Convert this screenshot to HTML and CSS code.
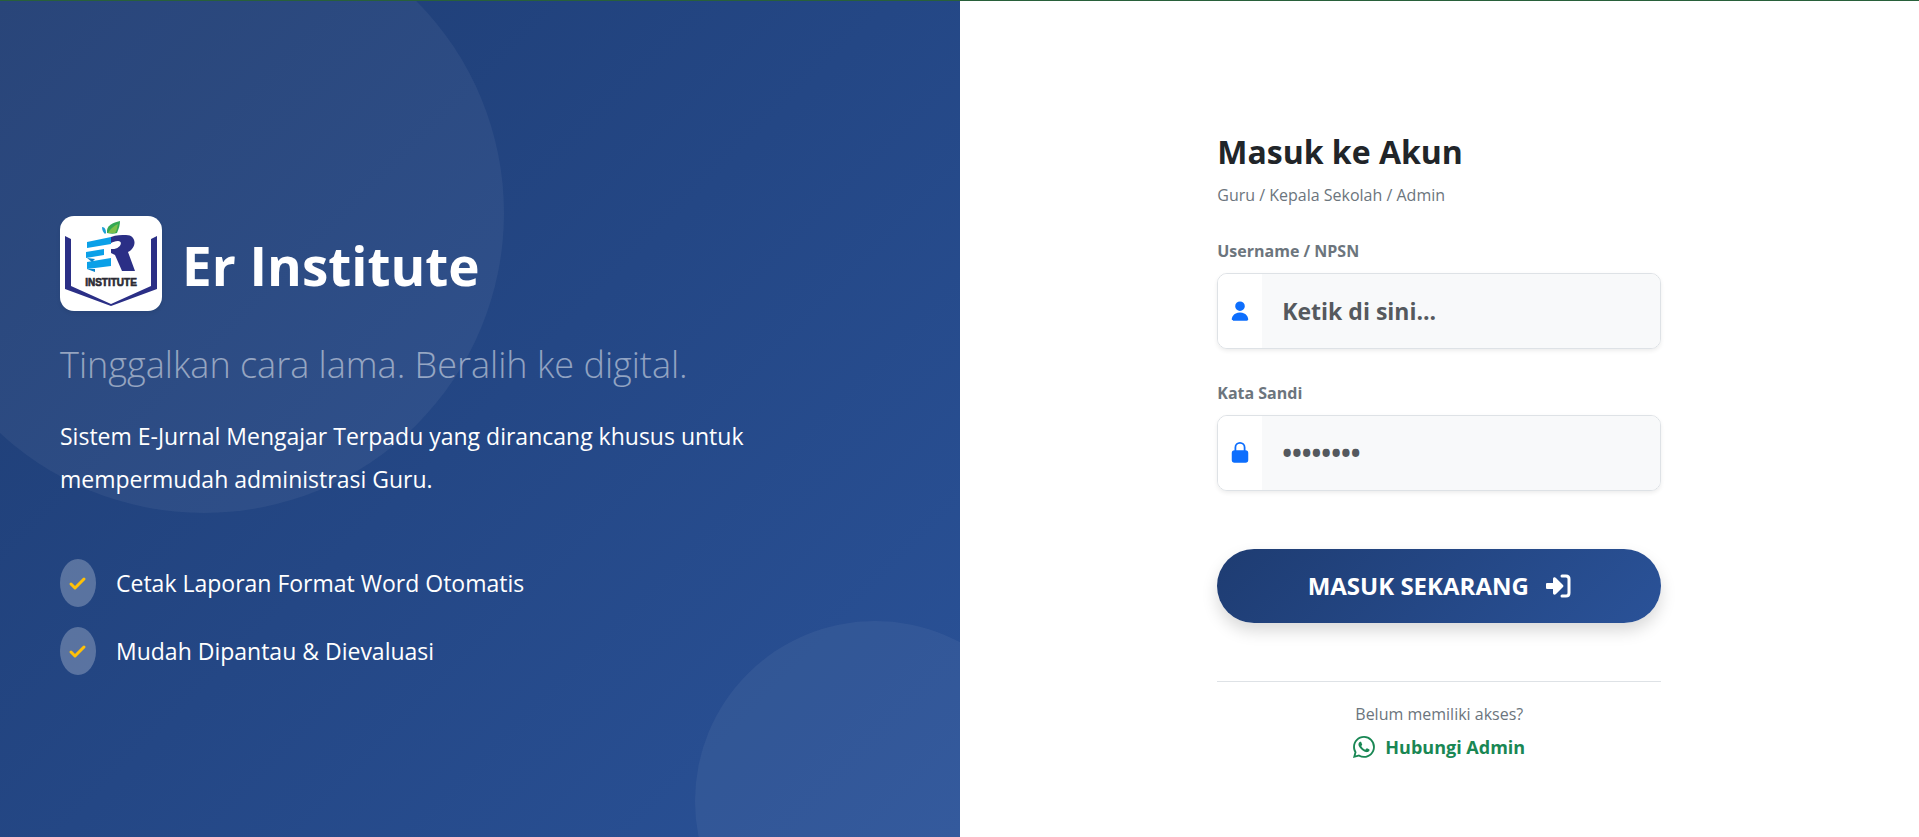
FILE: index.html
```html
<!DOCTYPE html>
<html lang="id">
<head>
  <meta charset="UTF-8">
  <meta name="viewport" content="width=device-width, initial-scale=1.0">
  <title>Login - Er Institute</title>
  <link rel="stylesheet" href="styles.css">
</head>
<body>
  <main class="login-page">
    <!-- Brand -->
    <section class="brand-side">
      <div class="circle circle-top"></div>
      <div class="circle circle-bottom"></div>

      <div class="brand-content">
        <div class="brand-header">
          <div class="brand-logo">
            <svg viewBox="0 0 92 85" role="img" aria-label="Logo Er Institute">
              <path d="M0 15l6 3v47l40 18 40-18V18l6-3v53L46 85 0 68z" fill="#2b2f86"/>
              <path d="M40 13c-2-2-3-4-3-7 3 0 4 3 4 6z" fill="#1c9fd8"/>
              <path d="M42 12c-1-8 6-10 13-12 0 4-1 7-3 12-3 1-6 1-10 0z" fill="#35a853"/>
              <path d="M43 12c3-5 6-7 10-9-1 4-1 6-3 9z" fill="#7cc04a"/>
              <path d="M22 21l24-5v7l-24 4zM21 31l18-3v6l-18 3zM22 41l24-4v8l-24 3z" fill="#0aa0e8"/>
              <path d="M22 37l8 1-3 3zM22 48h8v3z" fill="#0a86cc"/>
              <path d="M46 16c5-2 11-2 15-2 11 0 11 13 2 17l7 19H57l-7-16-4-2v-4c9 1 13-8 7-8-3 0-5 1-7 2z" fill="#2b2f86"/>
              <text x="46" y="65" text-anchor="middle" class="logo-text">INSTITUTE</text>
            </svg>
          </div>
          <h1>Er Institute</h1>
        </div>

        <h2 class="tagline">Tinggalkan cara lama. Beralih ke digital.</h2>
        <p class="description">Sistem E-Jurnal Mengajar Terpadu yang dirancang khusus untuk mempermudah administrasi Guru.</p>

        <ul class="features">
          <li>
            <span class="check">
              <svg viewBox="0 0 20 20" aria-hidden="true"><path d="M3 11l4 4 9-9"/></svg>
            </span>
            Cetak Laporan Format Word Otomatis
          </li>
          <li>
            <span class="check">
              <svg viewBox="0 0 20 20" aria-hidden="true"><path d="M3 11l4 4 9-9"/></svg>
            </span>
            Mudah Dipantau &amp; Dievaluasi
          </li>
        </ul>
      </div>
    </section>

    <!-- Form login -->
    <section class="form-side">
      <div class="form-box">
        <h2>Masuk ke Akun</h2>
        <p class="subtitle">Guru / Kepala Sekolah / Admin</p>

        <form>
          <div class="form-group">
            <label for="username">Username / NPSN</label>
            <div class="input-group">
              <span class="input-icon">
                <svg viewBox="0 0 16 16" aria-hidden="true"><path d="M3 15s-1 0-1-1 1-5 6-5 6 4 6 5-1 1-1 1zm5-7a3.500 3.500 0 1 0 0-7 3.500 3.500 0 0 0 0 7"/></svg>
              </span>
              <input type="text" id="username" name="username" placeholder="Ketik di sini...">
            </div>
          </div>

          <div class="form-group">
            <label for="password">Kata Sandi</label>
            <div class="input-group">
              <span class="input-icon">
                <svg viewBox="0 0 16 16" aria-hidden="true"><path d="M8 0a4 4 0 0 0-4 4v2.050a2 2 0 0 0-2 2V13a2 2 0 0 0 2 2h8a2 2 0 0 0 2-2V8a2 2 0 0 0-2-2V4a4 4 0 0 0-4-4m0 1.300A2.700 2.700 0 0 1 10.700 4v2H5.300V4A2.700 2.700 0 0 1 8 1.300"/></svg>
              </span>
              <input type="password" id="password" name="password" placeholder="••••••••">
            </div>
          </div>

          <button type="submit" class="btn-login">
            MASUK SEKARANG
            <svg viewBox="0 0 26 24" aria-hidden="true">
              <path d="M2 9h6V5c0-2 2-2 3-1l7 7q1 1 0 2l-7 7c-1 1-3 1-3-1v-4H2q-1 0-1-1v-4q0-1 1-1z" fill="currentColor"/>
              <path d="M17 2h4q3 0 3 3v14q0 3-3 3h-4" fill="none" stroke="currentColor" stroke-width="3" stroke-linecap="round"/>
            </svg>
          </button>
        </form>

        <div class="contact">
          <p>Belum memiliki akses?</p>
          <a href="#">
            <svg viewBox="0 0 16 16" aria-hidden="true"><path d="M13.601 2.326A7.850 7.850 0 0 0 7.994 0C3.627 0 .068 3.558.064 7.926c0 1.399.366 2.760 1.057 3.965L0 16l4.204-1.102a7.900 7.900 0 0 0 3.790.965h.004c4.368 0 7.926-3.558 7.930-7.930A7.900 7.900 0 0 0 13.600 2.326zM7.994 14.521a6.600 6.600 0 0 1-3.356-.920l-.240-.144-2.494.654.666-2.433-.156-.251a6.560 6.560 0 0 1-1.007-3.505c0-3.626 2.957-6.584 6.591-6.584a6.560 6.560 0 0 1 4.660 1.931 6.560 6.560 0 0 1 1.928 4.660c-.004 3.639-2.961 6.592-6.592 6.592m3.615-4.934c-.197-.099-1.170-.578-1.353-.646-.182-.065-.315-.099-.445.099-.133.197-.513.646-.627.775-.114.133-.232.148-.430.050-.197-.100-.836-.308-1.592-.985-.590-.525-.985-1.175-1.103-1.372-.114-.198-.011-.304.088-.403.087-.088.197-.232.296-.346.100-.114.133-.198.198-.330.065-.134.034-.248-.015-.347-.050-.099-.445-1.076-.612-1.470-.160-.389-.323-.335-.445-.340-.114-.007-.247-.007-.380-.007a.730.730 0 0 0-.529.247c-.182.198-.691.677-.691 1.654s.710 1.916.810 2.049c.098.133 1.394 2.132 3.383 2.992.470.205.840.326 1.129.418.475.152.904.129 1.246.080.380-.058 1.171-.480 1.338-.943.164-.464.164-.860.114-.943-.049-.084-.182-.133-.380-.232"/></svg>
            Hubungi Admin
          </a>
        </div>
      </div>
    </section>
  </main>
</body>
</html>
```
FILE: styles.css
```css
:root {
  --brand-dark: #1e3c72;
  --brand-light: #2a5298;
  --primary-color: #0d6efd;
  --success-color: #198754;
  --warning-color: #ffc107;
  --text-color: #212529;
  --muted-color: #6c757d;
  --border-color: #dee2e6;
  --input-bg: #f8f9fa;
}
* { box-sizing: border-box; }
body {
  margin: 0;
  font-family: "Segoe UI", "Open Sans", "Noto Sans", sans-serif;
  color: var(--text-color);
  background-color: #fff;
}
h1, h2, p, ul { margin: 0; }
.login-page {
  display: grid;
  grid-template-columns: 1fr 1fr;
  min-height: 100vh;
  border-top: 1px solid #28603a;
}
.brand-side {
  position: relative;
  overflow: hidden;
  display: flex;
  align-items: center;
  padding: 48px 60px;
  color: #fff;
  background: linear-gradient(135deg, var(--brand-dark), var(--brand-light));
}
.circle {
  position: absolute;
  border-radius: 50%;
  background: rgba(255, 255, 255, 0.05);
}
.circle-top {
  width: 600px;
  height: 600px;
  top: -88px;
  left: -10%;
}
.circle-bottom {
  width: 360px;
  height: 360px;
  right: -10%;
  bottom: -144px;
}
.brand-content {
  position: relative;
  width: 100%;
  padding-top: 52px;
}
.brand-header {
  display: flex;
  align-items: center;
  gap: 20px;
  margin-bottom: 24px;
}
.brand-logo {
  display: flex;
  padding: 5px;
  border-radius: 14px;
  background: #fff;
  box-shadow: 0 2px 4px rgba(0, 0, 0, 0.075);
}
.brand-logo svg {
  width: 92px;
  height: 85px;
}
.logo-text {
  font: bold 10px "Liberation Sans", Arial, sans-serif;
  fill: #2b2a33;
  stroke: #2b2a33;
  stroke-width: 0.6;
}
.brand-header h1 {
  padding-top: 6px;
  font-size: 53px;
  line-height: 64px;
  font-weight: 700;
}
.tagline {
  margin-bottom: 20px;
  font-size: 36px;
  line-height: 60px;
  font-weight: 300;
  color: rgba(255, 255, 255, 0.5);
}
.description {
  max-width: 700px;
  margin-bottom: 58px;
  font-size: 23px;
  line-height: 43px;
}
.features {
  display: grid;
  gap: 20px;
  padding: 0;
  list-style: none;
  font-size: 23px;
}
.features li {
  display: flex;
  align-items: center;
  gap: 20px;
}
.check {
  display: flex;
  align-items: center;
  justify-content: center;
  width: 36px;
  height: 48px;
  border-radius: 50%;
  background: rgba(255, 255, 255, 0.25);
}
.check svg {
  width: 20px;
  height: 20px;
  fill: none;
  stroke: var(--warning-color);
  stroke-width: 3;
  stroke-linecap: round;
  stroke-linejoin: round;
}
.form-side {
  display: flex;
  align-items: center;
  justify-content: center;
  padding: 48px;
}
.form-box {
  width: 100%;
  max-width: 444px;
  padding-top: 56px;
}
.form-box h2 {
  margin-bottom: 10px;
  font-size: 32px;
  line-height: 42px;
  font-weight: 700;
}
.subtitle {
  margin-bottom: 32px;
  font-size: 16px;
  line-height: 24px;
  color: var(--muted-color);
}
.form-group { margin-bottom: 32px; }
label {
  display: block;
  margin-bottom: 10px;
  font-size: 16px;
  line-height: 24px;
  font-weight: 700;
  color: var(--muted-color);
}
.input-group {
  display: flex;
  overflow: hidden;
  border: 1px solid var(--border-color);
  border-radius: 10px;
  box-shadow: 0 2px 4px rgba(0, 0, 0, 0.075);
}
.input-icon {
  display: flex;
  align-items: center;
  justify-content: center;
  width: 44px;
  background: #fff;
}
.input-icon svg {
  width: 22px;
  height: 22px;
  fill: var(--primary-color);
}
input {
  flex: 1;
  min-width: 0;
  height: 74px;
  padding: 0 20px;
  border: 0;
  background: var(--input-bg);
  font-family: inherit;
  font-size: 23px;
  font-weight: 700;
  color: var(--text-color);
}
input[type="password"] { font-size: 26px; }
input::placeholder { color: #55595e; }
input:focus { outline: 2px solid var(--primary-color); outline-offset: -2px; }
.btn-login {
  display: flex;
  align-items: center;
  justify-content: center;
  gap: 16px;
  width: 100%;
  height: 74px;
  margin-top: 58px;
  border: 0;
  border-radius: 50px;
  background: linear-gradient(135deg, var(--brand-dark), var(--brand-light));
  box-shadow: 0 8px 16px rgba(0, 0, 0, 0.15);
  font-family: inherit;
  font-size: 24px;
  font-weight: 700;
  color: #fff;
  cursor: pointer;
}
.btn-login svg {
  width: 26px;
  height: 24px;
}
.contact {
  margin-top: 58px;
  padding-top: 20px;
  border-top: 1px solid var(--border-color);
  text-align: center;
}
.contact p {
  font-size: 16px;
  line-height: 24px;
  color: var(--muted-color);
}
.contact a {
  display: inline-flex;
  align-items: center;
  gap: 10px;
  margin-top: 8px;
  font-size: 18px;
  line-height: 27px;
  font-weight: 700;
  color: var(--success-color);
  text-decoration: none;
}
.contact a svg {
  width: 22px;
  height: 22px;
  fill: currentColor;
}
@media (max-width: 900px) {
  .login-page { grid-template-columns: 1fr; }
  .brand-side { display: none; }
}
```
